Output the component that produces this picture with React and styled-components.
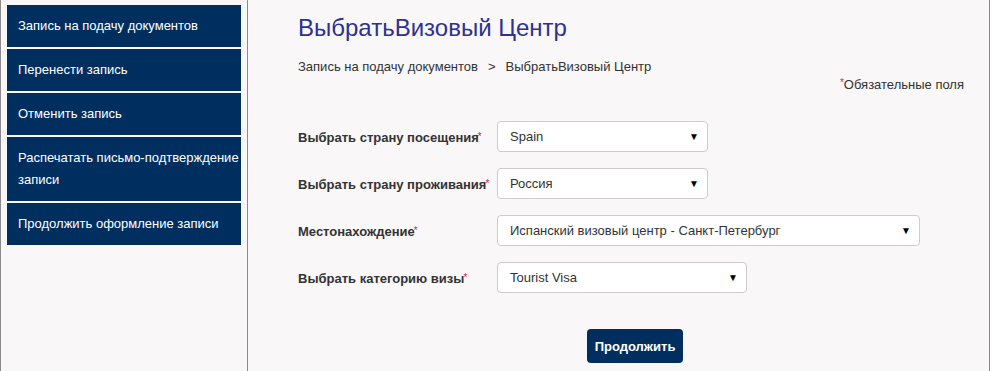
import React from 'react';
import styled, { createGlobalStyle } from 'styled-components';

const GlobalStyle = createGlobalStyle`
  html, body {
    margin: 0;
    padding: 0;
    background: #ffffff;
  }
  body {
    font-family: 'Liberation Sans', Arial, sans-serif;
  }
`;

const menuItems = [
  'Запись на подачу документов',
  'Перенести запись',
  'Отменить запись',
  'Распечатать письмо-подтверждение записи',
  'Продолжить оформление записи',
];

const fields = [
  { label: 'Выбрать страну посещения', value: 'Spain', width: 211 },
  { label: 'Выбрать страну проживания', value: 'Россия', width: 211 },
  { label: 'Местонахождение', value: 'Испанский визовый центр - Санкт-Петербург', width: 423 },
  { label: 'Выбрать категорию визы', value: 'Tourist Visa', width: 250 },
];

export default function App() {
  return (
    <>
      <GlobalStyle />
      <Page>
        <Sidebar>
          {menuItems.map((item) => (
            <MenuItem key={item}>{item}</MenuItem>
          ))}
        </Sidebar>
        <Main>
          <Title>ВыбратьВизовый Центр</Title>
          <Breadcrumb>
            Запись на подачу документов<Sep>&gt;</Sep>ВыбратьВизовый Центр
          </Breadcrumb>
          <Required>
            <Star>*</Star>Обязательные поля
          </Required>
          <Form>
            {fields.map((f) => (
              <Row key={f.label}>
                <Label>
                  {f.label}
                  <Star>*</Star>
                </Label>
                <SelectBox $width={f.width}>
                  <span>{f.value}</span>
                  <Arrow>▼</Arrow>
                </SelectBox>
              </Row>
            ))}
          </Form>
          <Actions>
            <Button>Продолжить</Button>
          </Actions>
        </Main>
      </Page>
    </>
  );
}

const Page = styled.div`
  display: flex;
  width: 988px;
  min-height: 371px;
  border-left: 1px solid #8e8a8b;
  border-right: 1px solid #8e8a8b;
  background: #f9f7f8;
`;

const Sidebar = styled.nav`
  width: 234px;
  flex: 0 0 234px;
  padding: 5px 6px 0 6px;
  border-right: 1px solid #8e8a8b;
  display: flex;
  flex-direction: column;
  gap: 2px;
`;

const MenuItem = styled.div`
  background: #002f5f;
  color: #ffffff;
  font-size: 13px;
  line-height: 22px;
  padding: 10px 0 10px 11px;
`;

const Main = styled.main`
  flex: 1;
  padding: 15px 25px 0 50px;
  color: #333333;
`;

const Title = styled.h1`
  margin: 0;
  font-size: 24px;
  line-height: 26px;
  font-weight: normal;
  color: #2d3192;
`;

const Breadcrumb = styled.div`
  margin-top: 17px;
  font-size: 13px;
  line-height: 18px;
  color: #333333;
`;

const Sep = styled.span`
  margin: 0 10px;
`;

const Required = styled.div`
  text-align: right;
  font-size: 13px;
  line-height: 18px;
  color: #333333;
`;

const Star = styled.sup`
  color: #d9272e;
  font-size: 10px;
  font-weight: normal;
  vertical-align: top;
  line-height: 10px;
  position: relative;
  top: 2px;
  margin-left: -1px;
`;

const Form = styled.div`
  margin-top: 27px;
  display: flex;
  flex-direction: column;
  gap: 16px;
`;

const Row = styled.div`
  display: flex;
  align-items: center;
`;

const Label = styled.div`
  width: 199px;
  flex: 0 0 199px;
  padding-top: 2px;
  font-size: 13px;
  font-weight: bold;
  color: #333333;
`;

const SelectBox = styled.div`
  box-sizing: border-box;
  width: ${(p) => p.$width}px;
  height: 31px;
  display: flex;
  align-items: center;
  justify-content: space-between;
  padding: 0 8px 0 12px;
  background: #ffffff;
  border: 1px solid #cccccc;
  border-radius: 4px;
  font-size: 13px;
  color: #333333;
`;

const Arrow = styled.span`
  font-size: 10px;
  color: #000000;
`;

const Actions = styled.div`
  margin-top: 36px;
  padding-left: 289px;
`;

const Button = styled.button`
  width: 96px;
  height: 34px;
  background: #002f5f;
  color: #ffffff;
  border: none;
  border-radius: 4px;
  font-family: 'Liberation Sans', Arial, sans-serif;
  font-size: 13px;
  font-weight: bold;
  cursor: pointer;
`;
